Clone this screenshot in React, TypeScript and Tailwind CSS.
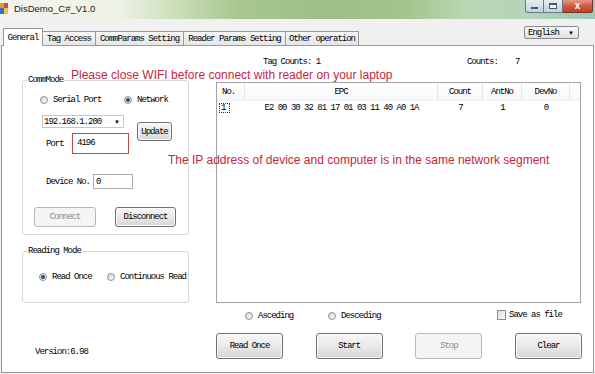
const base = "font-['Liberation_Mono',monospace] text-[9px] tracking-[-1px] leading-[12px] whitespace-nowrap";
const ui = base + " text-black";
const red = "font-['Liberation_Sans',Arial,sans-serif] text-[12px] leading-[12px] text-[#c4283a] whitespace-nowrap";

function Radio({ checked }: { checked?: boolean }) {
  return (
    <span className="w-[8px] h-[8px] rounded-full border border-[#8e8f8f] bg-linear-to-br from-[#d9d9d9] to-[#fbfbfb] flex items-center justify-center shrink-0">
      {checked && <span className="w-[4px] h-[4px] rounded-full bg-[#1f4e7c]" />}
    </span>
  );
}

function Btn({ label, className, disabled }: { label: string; className: string; disabled?: boolean }) {
  return (
    <div
      className={
        "flex items-center justify-center rounded-[3px] border " +
        (disabled
          ? "border-[#b5b8bb] bg-[#f4f4f4] "
          : "border-[#707070] bg-linear-to-b from-[#f6f6f6] via-[#e9e9e9] to-[#d6d6d6] shadow-[inset_0_0_0_1px_#fbfbfb] ") +
        className
      }
    >
      <span className={base + (disabled ? " text-[#8d8d8d]" : " text-black")}>{label}</span>
    </div>
  );
}

function Group({ title, className, children }: { title: string; className: string; children: React.ReactNode }) {
  return (
    <div className={"relative border border-[#d5d8dc] rounded-[3px] flex flex-col " + className}>
      <span className={ui + " absolute -top-[7px] left-[4px] bg-white px-[1px]"}>{title}</span>
      {children}
    </div>
  );
}

function AppIcon() {
  return (
    <svg width="8" height="11" viewBox="0 0 8 11">
      <rect x="0" y="0" width="4" height="5" fill="#d8a03a" />
      <rect x="4" y="0" width="4" height="5" fill="#d84a3a" />
      <rect x="0" y="5" width="4" height="6" fill="#3a6fc8" />
      <rect x="4" y="5" width="4" height="6" fill="#e8c84a" />
    </svg>
  );
}

export default function App() {
  return (
    <div className="w-[595px] h-[374px] bg-[#f0f0f0] flex flex-col overflow-hidden relative">
      {/* title bar */}
      <div className="h-[19px] shrink-0 flex items-start bg-[linear-gradient(90deg,#f2f4ee_0%,#eef2e6_20%,#c9ddb6_30%,#a7c78f_40%,#9dbf87_55%,#a4c48e_68%,#b9d6b2_78%,#b4d5ba_88%,#9ccab7_100%)]">
        <div className="pt-[3px]">
          <AppIcon />
        </div>
        <span className="ml-[6px] mt-[3px] font-['Liberation_Sans',Arial,sans-serif] text-[9.5px] leading-[12px] text-[#1a1a1a]">
          DisDemo_C#_V1.0
        </span>
        <div className="ml-auto mr-[2px] flex h-[13px]">
          <div className="w-[19px] border border-t-0 border-[#6b7a88] rounded-bl-[3px] bg-linear-to-b from-[#e4ecf2] to-[#c3d1dc] flex items-center justify-center">
            <span className="w-[7px] h-[2px] bg-white border border-[#4a5866] mt-[3px]" />
          </div>
          <div className="w-[19px] border border-t-0 border-l-0 border-[#6b7a88] bg-linear-to-b from-[#e4ecf2] to-[#c3d1dc] flex items-center justify-center">
            <span className="w-[8px] h-[6px] border border-[#4a5866] border-t-2 bg-white/60" />
          </div>
          <div className="w-[30px] border border-t-0 border-l-0 border-[#7a3226] rounded-br-[3px] bg-linear-to-b from-[#e49a86] via-[#d0583f] to-[#c04128] flex items-center justify-center">
            <span className="text-white text-[10px] font-bold font-['Liberation_Sans',Arial,sans-serif] leading-[10px]">x</span>
          </div>
        </div>
      </div>

      {/* tab strip */}
      <div className="h-[26px] shrink-0 flex justify-between">
        <div className="flex items-end pl-[3px] relative z-10">
          <div className="w-[40px] h-[18px] -mb-[1px] bg-white border border-b-0 border-[#9a9a9a] flex items-center justify-center">
            <span className={ui}>General</span>
          </div>
          <div className="w-[53px] h-[14px] bg-linear-to-b from-[#f6f6f6] to-[#e6e6e6] border border-l-0 border-b-0 border-[#9a9a9a] flex items-center justify-center">
            <span className={ui}>Tag Access</span>
          </div>
          <div className="w-[88px] h-[14px] bg-linear-to-b from-[#f6f6f6] to-[#e6e6e6] border border-l-0 border-b-0 border-[#9a9a9a] flex items-center justify-center">
            <span className={ui}>CommParams Setting</span>
          </div>
          <div className="w-[102px] h-[14px] bg-linear-to-b from-[#f6f6f6] to-[#e6e6e6] border border-l-0 border-b-0 border-[#9a9a9a] flex items-center justify-center">
            <span className={ui}>Reader Params Setting</span>
          </div>
          <div className="w-[73px] h-[14px] bg-linear-to-b from-[#f6f6f6] to-[#e6e6e6] border border-l-0 border-b-0 border-[#9a9a9a] flex items-center justify-center">
            <span className={ui}>Other operation</span>
          </div>
        </div>
        <div className="mt-[7px] mr-[16px] w-[55px] h-[13px] rounded-[2px] border border-[#8a8a8a] bg-linear-to-b from-[#f7f7f7] to-[#e2e2e2] flex items-center pl-[3px] pr-[4px]">
          <span className={ui}>English</span>
          <span className="ml-auto text-[6px] leading-[6px] text-black">▼</span>
        </div>
      </div>

      {/* tab page */}
      <div className="flex-1 mx-[1px] mb-[1px] bg-white border border-[#9a9a9a] flex">
        {/* left column */}
        <div className="w-[212px] shrink-0 flex flex-col">
          <Group title="CommMode" className="mt-[34px] ml-[20px] w-[167px] h-[155px]">
            <div className="mt-[13px] pl-[17px] flex items-center h-[12px]">
              <div className="w-[84px] flex items-center gap-[5px]">
                <Radio />
                <span className={ui}>Serial Port</span>
              </div>
              <div className="flex items-center gap-[5px]">
                <Radio checked />
                <span className={ui}>Network</span>
              </div>
            </div>
            <div className="mt-[9px] pl-[19px] flex items-start">
              <div className="flex flex-col">
                <div className="w-[82px] h-[13px] border border-[#c8c8c8] bg-white flex items-center pl-[1px] pr-[3px]">
                  <span className={ui}>192.168.1.200</span>
                  <span className="ml-auto text-[6px] leading-[6px] text-black">▼</span>
                </div>
                <div className="mt-[5px] flex items-center">
                  <span className={ui + " ml-[4px] w-[26px]"}>Port</span>
                  <div className="w-[57px] h-[21px] border border-[#c0484c] bg-white flex items-start pt-[3px] pl-[4px]">
                    <span className={ui}>4196</span>
                  </div>
                </div>
              </div>
              <Btn label="Update" className="ml-[8px] mt-[7px] w-[35px] h-[19px]" />
            </div>
            <div className="mt-[20px] pl-[23px] flex items-center">
              <span className={ui + " w-[47px]"}>Device No.</span>
              <div className="w-[40px] h-[15px] border border-[#abadb3] bg-white flex items-center pl-[2px]">
                <span className={ui}>0</span>
              </div>
            </div>
            <div className="mt-[18px] pl-[11px] flex gap-[19px]">
              <Btn label="Connect" disabled className="w-[62px] h-[20px]" />
              <Btn label="Disconnect" className="w-[61px] h-[20px]" />
            </div>
          </Group>

          <Group title="Reading Mode" className="mt-[16px] ml-[20px] w-[167px] h-[52px]">
            <div className="mt-[19px] pl-[16px] flex items-center h-[12px]">
              <div className="w-[68px] flex items-center gap-[5px]">
                <Radio checked />
                <span className={ui}>Read Once</span>
              </div>
              <div className="flex items-center gap-[5px]">
                <Radio />
                <span className={ui}>Continuous Read</span>
              </div>
            </div>
          </Group>

          <span className={ui + " mt-[43px] pl-[33px]"}>Version:6.98</span>
        </div>

        {/* right column */}
        <div className="flex-1 flex flex-col">
          <div className="mt-[10px] pl-[49px] flex items-center h-[12px]">
            <span className={ui + " w-[204px] leading-[9px]"}>Tag Counts: 1</span>
            <span className={ui + " w-[48px] leading-[9px]"}>Counts:</span>
            <span className={ui + " leading-[9px]"}>7</span>
          </div>

          <div className="mt-[14px] ml-[2px] w-[365px] h-[221px] border border-[#a3a3a3] bg-white flex flex-col">
            <div className="h-[18px] flex bg-linear-to-b from-white to-[#f7f8f9] border-b border-[#eef0f2]">
              <div className="w-[28px] border-r border-[#e3e5e8] flex items-center pl-[5px]">
                <span className={ui}>No.</span>
              </div>
              <div className="w-[193px] border-r border-[#e3e5e8] flex items-center justify-center">
                <span className={ui}>EPC</span>
              </div>
              <div className="w-[45px] border-r border-[#e3e5e8] flex items-center justify-center">
                <span className={ui}>Count</span>
              </div>
              <div className="w-[39px] border-r border-[#e3e5e8] flex items-center justify-center">
                <span className={ui}>AntNo</span>
              </div>
              <div className="w-[48px] border-r border-[#e3e5e8] flex items-center justify-center">
                <span className={ui}>DevNo</span>
              </div>
            </div>
            <div className="h-[14px] flex items-center">
              <div className="w-[28px] pl-[2px] flex items-center">
                <span className="w-[11px] h-[10px] border border-dotted border-[#333] flex items-center pl-[1px]">
                  <span className={ui}>1</span>
                </span>
              </div>
              <div className="w-[193px] flex justify-center">
                <span className={ui}>E2 00 30 32 81 17 01 03 11 40 A0 1A</span>
              </div>
              <div className="w-[45px] flex justify-center">
                <span className={ui}>7</span>
              </div>
              <div className="w-[39px] flex justify-center">
                <span className={ui}>1</span>
              </div>
              <div className="w-[48px] flex justify-center">
                <span className={ui}>0</span>
              </div>
            </div>
          </div>

          <div className="mt-[6px] pl-[31px] flex items-center h-[12px]">
            <div className="w-[83px] flex items-center gap-[5px] mt-[2px]">
              <Radio />
              <span className={ui}>Asceding</span>
            </div>
            <div className="w-[169px] flex items-center gap-[5px] mt-[2px]">
              <Radio />
              <span className={ui}>Desceding</span>
            </div>
            <div className="flex items-center gap-[3px]">
              <span className="w-[9px] h-[10px] border border-[#8e8f8f] bg-linear-to-br from-[#dcdcdc] to-[#fafafa]" />
              <span className={ui}>Save as file</span>
            </div>
          </div>

          <div className="mt-[12px] ml-[2px] w-[366px] flex justify-between">
            <Btn label="Read Once" className="w-[67px] h-[26px]" />
            <Btn label="Start" className="w-[67px] h-[26px]" />
            <Btn label="Stop" disabled className="w-[67px] h-[26px]" />
            <Btn label="Clear" className="w-[67px] h-[26px]" />
          </div>
        </div>
      </div>

      {/* red annotations drawn over the form */}
      <span className={red + " absolute left-[71px] top-[69px]"}>
        Please close WIFI before connect with reader on your laptop
      </span>
      <span className={red + " absolute left-[168px] top-[154px]"}>
        The IP address of device and computer is in the same network segment
      </span>
    </div>
  );
}
